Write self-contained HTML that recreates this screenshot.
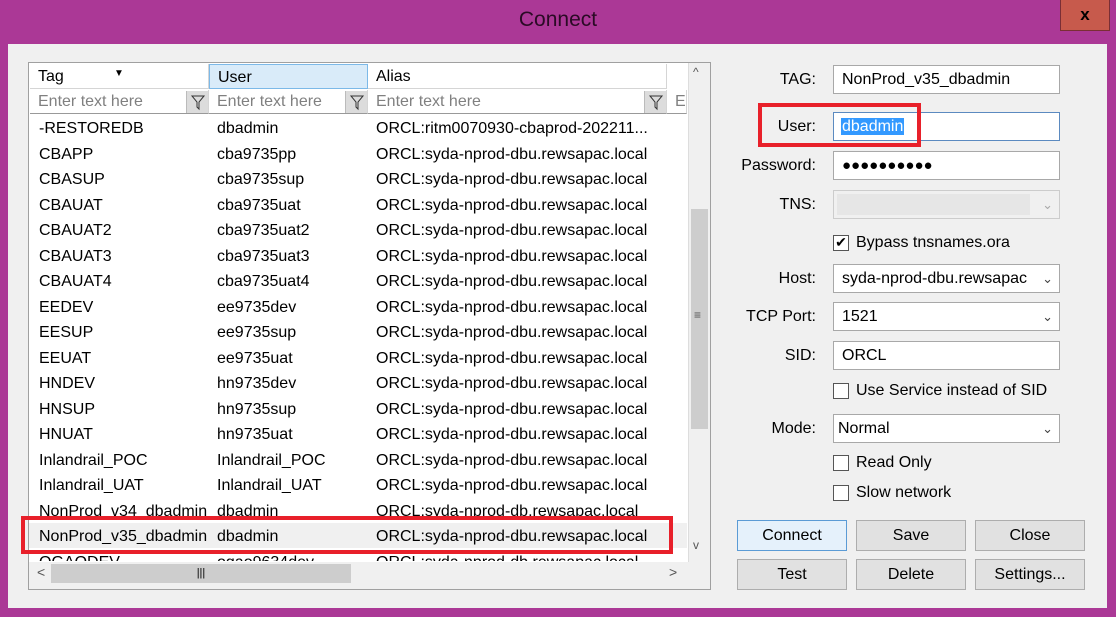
<!DOCTYPE html>
<html><head><style>
*{margin:0;padding:0;box-sizing:border-box}
body{width:1116px;height:617px;background:#ab3896;position:relative;overflow:hidden;font-family:"Liberation Sans",sans-serif;font-size:16px;color:#000}
.a{position:absolute}
.title{left:0;width:1116px;top:8px;text-align:center;font-size:21px;color:#2a0a25}
.x{left:1060px;top:0;width:50px;height:31px;background:#c75a4c;border:1px solid #7a2e35;border-top:none;text-align:center;font-size:17px;font-weight:bold;line-height:30px}
.client{left:8px;top:44px;width:1099px;height:564px;background:#f0f0f0}
.grid{left:28px;top:62px;width:683px;height:528px;border:1px solid #a0a0a0;background:#fff;overflow:hidden}
.hdr{height:25px;top:1px;border-right:1px solid #d5d5d5;border-bottom:1px solid #d5d5d5;padding-left:8px;line-height:26px}
.flt{top:27px;height:24px;color:#808080;padding-left:8px;line-height:24px;border-right:1px solid #d5d5d5;border-bottom:1px solid #999;overflow:hidden}
.fb{position:absolute;right:0;top:1px;width:22px;height:22px;background:#dcdcdc;border-left:1px solid #bbb}
.row{left:1px;width:655px;height:25.5px;line-height:25px}
.row span{position:absolute;white-space:nowrap}
.inp{left:833px;width:227px;height:29px;border:1px solid #a8a8a8;background:#fff;padding-left:8px;line-height:27px}
.lbl{width:100px;left:716px;text-align:right;line-height:29px}
.chk{left:833px;width:16px;height:16px;border:1px solid #555;background:#fff}
.cl{left:856px}
.dd{position:absolute;right:6px;top:0;font-size:13px;color:#444}
.btn{width:110px;height:31px;border:1px solid #adadad;background:#e1e1e1;text-align:center;line-height:29px}
</style></head><body>
<div class="a title">Connect</div>
<div class="a x">x</div>
<div class="a client"></div>
<div class="a grid">
 <div class="a hdr" style="left:1px;width:179px">Tag<span class="a" style="left:84px;top:-3px;font-size:10px">▼</span></div>
 <div class="a hdr" style="left:180px;width:159px;background:#d9ebf9;border:1px solid #7cb9e8">User</div>
 <div class="a hdr" style="left:339px;width:299px">Alias</div>
 <div class="a flt" style="left:1px;width:179px">Enter text here<div class="fb"><svg width="22" height="22"><path d="M5 5h12l-5 6v7l-2-2v-5z" fill="none" stroke="#333"/></svg></div></div>
 <div class="a flt" style="left:180px;width:159px">Enter text here<div class="fb"><svg width="22" height="22"><path d="M5 5h12l-5 6v7l-2-2v-5z" fill="none" stroke="#333"/></svg></div></div>
 <div class="a flt" style="left:339px;width:299px">Enter text here<div class="fb"><svg width="22" height="22"><path d="M5 5h12l-5 6v7l-2-2v-5z" fill="none" stroke="#333"/></svg></div></div>
 <div class="a flt" style="left:638px;width:20px;padding-left:8px;overflow:hidden">En</div>
 <div class="a" style="left:659px;top:0;width:22px;height:499px;background:#f0f0f0;border-left:1px solid #ddd"></div>
 <div class="a" style="left:662px;top:146px;width:17px;height:220px;background:#cdcdcd"></div>
 <div class="a" style="left:664px;top:2px;font-size:12px;color:#555">^</div>
 <div class="a" style="left:664px;top:475px;font-size:12px;color:#555">v</div>
 <div class="a" style="left:665px;top:245px;font-size:12px;color:#555">≡</div>
 <div class="a" style="left:0;top:499px;width:681px;height:23px;background:#f0f0f0"></div>
 <div class="a" style="left:22px;top:501px;width:300px;height:19px;background:#cdcdcd;text-align:center;font-size:11px;line-height:19px">|||</div>
 <div class="a" style="left:8px;top:501px;font-size:14px;color:#555">&lt;</div>
 <div class="a" style="left:640px;top:501px;font-size:14px;color:#555">&gt;</div>
 <div class="a" style="left:0;top:522px;width:681px;height:6px;background:#f0f0f0"></div>
</div>
<div class="a" style="left:29px;top:523px;width:658px;height:25px;background:#f0f0f0"></div>
<div class="a" id="rows" style="left:29px;top:116px;width:640px;height:445px;overflow:hidden">
<div class="a row" style="top:0"><span style="left:9px">-RESTOREDB</span><span style="left:187px">dbadmin</span><span style="left:346px">ORCL:ritm0070930-cbaprod-202211...</span></div>
<div class="a row" style="top:25.5px"><span style="left:9px">CBAPP</span><span style="left:187px">cba9735pp</span><span style="left:346px">ORCL:syda-nprod-dbu.rewsapac.local</span></div>
<div class="a row" style="top:51px"><span style="left:9px">CBASUP</span><span style="left:187px">cba9735sup</span><span style="left:346px">ORCL:syda-nprod-dbu.rewsapac.local</span></div>
<div class="a row" style="top:76.5px"><span style="left:9px">CBAUAT</span><span style="left:187px">cba9735uat</span><span style="left:346px">ORCL:syda-nprod-dbu.rewsapac.local</span></div>
<div class="a row" style="top:102px"><span style="left:9px">CBAUAT2</span><span style="left:187px">cba9735uat2</span><span style="left:346px">ORCL:syda-nprod-dbu.rewsapac.local</span></div>
<div class="a row" style="top:127.5px"><span style="left:9px">CBAUAT3</span><span style="left:187px">cba9735uat3</span><span style="left:346px">ORCL:syda-nprod-dbu.rewsapac.local</span></div>
<div class="a row" style="top:153px"><span style="left:9px">CBAUAT4</span><span style="left:187px">cba9735uat4</span><span style="left:346px">ORCL:syda-nprod-dbu.rewsapac.local</span></div>
<div class="a row" style="top:178.5px"><span style="left:9px">EEDEV</span><span style="left:187px">ee9735dev</span><span style="left:346px">ORCL:syda-nprod-dbu.rewsapac.local</span></div>
<div class="a row" style="top:204px"><span style="left:9px">EESUP</span><span style="left:187px">ee9735sup</span><span style="left:346px">ORCL:syda-nprod-dbu.rewsapac.local</span></div>
<div class="a row" style="top:229.5px"><span style="left:9px">EEUAT</span><span style="left:187px">ee9735uat</span><span style="left:346px">ORCL:syda-nprod-dbu.rewsapac.local</span></div>
<div class="a row" style="top:255px"><span style="left:9px">HNDEV</span><span style="left:187px">hn9735dev</span><span style="left:346px">ORCL:syda-nprod-dbu.rewsapac.local</span></div>
<div class="a row" style="top:280.5px"><span style="left:9px">HNSUP</span><span style="left:187px">hn9735sup</span><span style="left:346px">ORCL:syda-nprod-dbu.rewsapac.local</span></div>
<div class="a row" style="top:306px"><span style="left:9px">HNUAT</span><span style="left:187px">hn9735uat</span><span style="left:346px">ORCL:syda-nprod-dbu.rewsapac.local</span></div>
<div class="a row" style="top:331.5px"><span style="left:9px">Inlandrail_POC</span><span style="left:187px">Inlandrail_POC</span><span style="left:346px">ORCL:syda-nprod-dbu.rewsapac.local</span></div>
<div class="a row" style="top:357px"><span style="left:9px">Inlandrail_UAT</span><span style="left:187px">Inlandrail_UAT</span><span style="left:346px">ORCL:syda-nprod-dbu.rewsapac.local</span></div>
<div class="a row" style="top:382.5px"><span style="left:9px">NonProd_v34_dbadmin</span><span style="left:187px">dbadmin</span><span style="left:346px">ORCL:syda-nprod-db.rewsapac.local</span></div>
<div class="a row" style="top:408px"><span style="left:9px">NonProd_v35_dbadmin</span><span style="left:187px">dbadmin</span><span style="left:346px">ORCL:syda-nprod-dbu.rewsapac.local</span></div>
<div class="a row" style="top:433.5px"><span style="left:9px">OGAODEV</span><span style="left:187px">ogao9634dev</span><span style="left:346px">ORCL:syda-nprod-db.rewsapac.local</span></div>
</div>
<div class="a" style="left:21px;top:516px;width:652px;height:38px;border:4px solid #e8202a"></div>

<div class="a lbl" style="top:65px">TAG:</div><div class="a inp" style="top:65px">NonProd_v35_dbadmin</div>
<div class="a lbl" style="top:112px">User:</div><div class="a inp" style="top:112px;border-color:#5b8ac0;padding-left:7px"><span style="background:#3399ff;color:#fff;padding:0 1px">dbadmin</span></div>
<div class="a" style="left:758px;top:103px;width:163px;height:44px;border:4px solid #e8202a"></div>
<div class="a lbl" style="top:151px">Password:</div><div class="a inp" style="top:151px;font-size:15px;letter-spacing:0px">●●●●●●●●●●</div>
<div class="a lbl" style="top:190px">TNS:</div><div class="a inp" style="top:190px;background:#f0f0f0;border-color:#ccc"><div class="a" style="left:3px;top:3px;width:193px;height:21px;background:#e6e6e6"></div><span class="dd" style="color:#aaa">⌄</span></div>
<div class="a chk" style="top:235px;font-size:14px;line-height:13px;text-align:center">✔</div><div class="a cl" style="top:234px">Bypass tnsnames.ora</div>
<div class="a lbl" style="top:264px">Host:</div><div class="a inp" style="top:264px;white-space:nowrap;overflow:hidden">syda-nprod-dbu.rewsapac<span class="dd" style="background:#fff;padding-left:3px">⌄</span></div>
<div class="a lbl" style="top:302px">TCP Port:</div><div class="a inp" style="top:302px">1521<span class="dd">⌄</span></div>
<div class="a lbl" style="top:341px">SID:</div><div class="a inp" style="top:341px">ORCL</div>
<div class="a chk" style="top:383px"></div><div class="a cl" style="top:382px">Use Service instead of SID</div>
<div class="a lbl" style="top:414px">Mode:</div><div class="a inp" style="top:414px;padding-left:4px">Normal<span class="dd">⌄</span></div>
<div class="a chk" style="top:455px"></div><div class="a cl" style="top:454px">Read Only</div>
<div class="a chk" style="top:485px"></div><div class="a cl" style="top:484px">Slow network</div>
<div class="a btn" style="left:737px;top:520px;border-color:#5b9bd5;background:#e5f1fb">Connect</div>
<div class="a btn" style="left:856px;top:520px">Save</div>
<div class="a btn" style="left:975px;top:520px">Close</div>
<div class="a btn" style="left:737px;top:559px">Test</div>
<div class="a btn" style="left:856px;top:559px">Delete</div>
<div class="a btn" style="left:975px;top:559px">Settings...</div>
</body></html>
